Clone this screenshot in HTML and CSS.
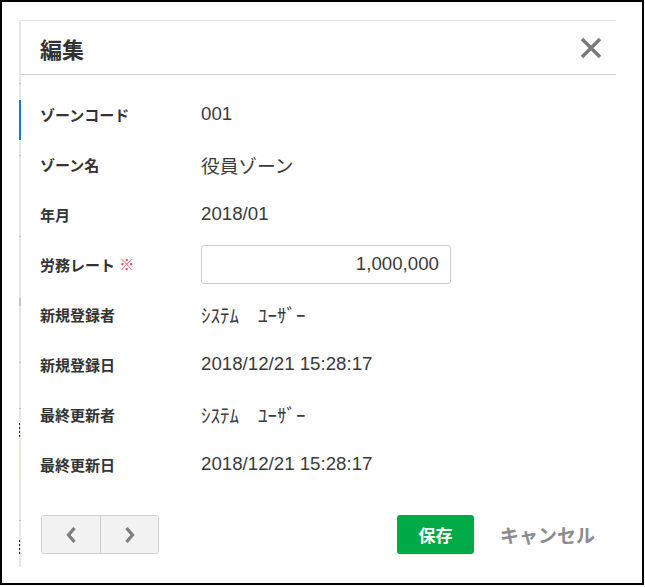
FILE: index.html
```html
<!DOCTYPE html>
<html lang="ja">
<head>
<meta charset="utf-8">
<title>編集</title>
<link rel="stylesheet" href="styles.css">
</head>
<body>
<div class="frame">
	<div class="rail"></div>
	<div class="dialog">
		<div class="dialog_head">
			<h1 class="dialog_title">編集</h1>
			<button class="btn_close" type="button" title="閉じる">
				<svg width="22" height="22" viewBox="0 0 22 22"><path d="M2 2 L20 20 M20 2 L2 20" stroke="#7a7a7a" stroke-width="3.4" fill="none"/></svg>
			</button>
		</div>

		<div class="dialog_body">
			<div class="field_row">
				<label class="field_label">ゾーンコード</label>
				<div class="field_value">001</div>
			</div>
			<div class="field_row">
				<label class="field_label">ゾーン名</label>
				<div class="field_value">役員ゾーン</div>
			</div>
			<div class="field_row">
				<label class="field_label">年月</label>
				<div class="field_value">2018/01</div>
			</div>
			<div class="field_row">
				<label class="field_label">労務レート <span class="required">※</span></label>
				<div class="field_value"><input class="text_input" type="text" value="1,000,000"></div>
			</div>
			<div class="field_row">
				<label class="field_label">新規登録者</label>
				<div class="field_value kana">ｼｽﾃﾑ　ﾕｰｻﾞｰ</div>
			</div>
			<div class="field_row">
				<label class="field_label">新規登録日</label>
				<div class="field_value">2018/12/21 15:28:17</div>
			</div>
			<div class="field_row">
				<label class="field_label">最終更新者</label>
				<div class="field_value kana">ｼｽﾃﾑ　ﾕｰｻﾞｰ</div>
			</div>
			<div class="field_row">
				<label class="field_label">最終更新日</label>
				<div class="field_value">2018/12/21 15:28:17</div>
			</div>
		</div>

		<div class="dialog_foot">
			<div class="pager">
				<button class="pager_btn" type="button">
					<svg width="12" height="18" viewBox="0 0 12 18"><path d="M9.5 2 L3.5 9 L9.5 16" stroke="#7d7d7d" stroke-width="3.2" fill="none"/></svg>
				</button>
				<button class="pager_btn" type="button">
					<svg width="12" height="18" viewBox="0 0 12 18"><path d="M2.5 2 L8.5 9 L2.5 16" stroke="#7d7d7d" stroke-width="3.2" fill="none"/></svg>
				</button>
			</div>
			<div class="actions">
				<button class="btn_save" type="button">保存</button>
				<button class="btn_cancel" type="button">キャンセル</button>
			</div>
		</div>
	</div>
</div>
</body>
</html>
```

FILE: styles.css
```css
html, body {
margin: 0;
padding: 0;
background: #fff;
font-family: "Liberation Sans", "Noto Sans CJK JP", sans-serif;
color: #333;
}

.frame {
box-sizing: border-box;
width: 644px;
height: 585px;
border: 2px solid #000;
padding: 18px 0 0 17px;
display: flex;
align-items: flex-start;
overflow: hidden;
}

/* bits of the page behind the dialog */
.rail {
width: 2px;
height: 547px;
border-top-left-radius: 3px;
background:
  linear-gradient(#0a82c4, #0a82c4) 0 80px / 2px 40px no-repeat,
  linear-gradient(#c4c4c4, #c4c4c4) 0 63px / 2px 1px no-repeat,
  linear-gradient(#c4c4c4, #c4c4c4) 0 135px / 2px 1px no-repeat,
  linear-gradient(#c4c4c4, #c4c4c4) 0 216px / 2px 1px no-repeat,
  linear-gradient(#c4c4c4, #c4c4c4) 0 278px / 2px 8px no-repeat,
  linear-gradient(#c4c4c4, #c4c4c4) 0 342px / 2px 1px no-repeat,
  linear-gradient(#c4c4c4, #c4c4c4) 0 388px / 2px 1px no-repeat,
  repeating-linear-gradient(#222 0 2px, transparent 2px 4px) 0 403px / 1px 14px no-repeat,
  linear-gradient(#efe4d6, #efe4d6) 0 420px / 2px 40px no-repeat,
  linear-gradient(#c4c4c4, #c4c4c4) 0 500px / 2px 1px no-repeat,
  repeating-linear-gradient(#222 0 2px, transparent 2px 4px) 0 520px / 1px 14px no-repeat,
  #e6e6e6;
}

.dialog {
width: 595px;
height: 547px;
background: #fff;
border-top: 1px solid #e2e2e2;
box-sizing: border-box;
display: flex;
flex-direction: column;
}

.dialog_head {
height: 54px;
box-sizing: border-box;
border-bottom: 1px solid #d4d4d4;
display: flex;
align-items: center;
justify-content: space-between;
padding: 0 14px 0 19px;
}

.dialog_title {
margin: 0;
font-size: 22px;
font-weight: bold;
color: #333;
}

.btn_close {
border: 0;
background: transparent;
padding: 0;
width: 22px;
height: 22px;
display: flex;
}

.dialog_body {
padding: 14px 0 0 19px;
}

.field_row {
height: 50px;
display: flex;
align-items: center;
}

.field_label {
width: 161px;
flex: none;
font-size: 15px;
font-weight: bold;
color: #333;
}

.required {
color: #e8436f;
font-size: 15px;
font-weight: normal;
vertical-align: 1px;
}

.field_value {
font-size: 18.7px;
color: #3a3a3a;
}

.kana {
font-size: 19px;
}

.text_input {
box-sizing: border-box;
width: 250px;
height: 39px;
border: 1px solid #ccc;
border-radius: 3px;
padding: 0 11px;
text-align: right;
font-family: "Liberation Sans", "Noto Sans CJK JP", sans-serif;
font-size: 18.7px;
color: #3a3a3a;
outline: none;
}

.dialog_foot {
margin-top: 26px;
padding: 0 21px 0 20px;
display: flex;
align-items: center;
justify-content: space-between;
}

.pager {
display: flex;
border: 1px solid #cfcfcf;
border-radius: 3px;
overflow: hidden;
}

.pager_btn {
width: 58px;
height: 37px;
border: 0;
background: #f2f2f2;
display: flex;
align-items: center;
justify-content: center;
padding: 0;
}

.pager_btn + .pager_btn {
border-left: 1px solid #cfcfcf;
}

.actions {
display: flex;
align-items: center;
gap: 26px;
}

.btn_save {
width: 77px;
height: 39px;
border: 0;
border-radius: 3px;
background: #00aa47;
color: #fff;
font-family: "Liberation Sans", "Noto Sans CJK JP", sans-serif;
font-size: 17px;
font-weight: bold;
padding: 0;
}

.btn_cancel {
border: 0;
background: transparent;
padding: 0;
font-family: "Liberation Sans", "Noto Sans CJK JP", sans-serif;
font-size: 19px;
font-weight: bold;
color: #8c8c8c;
}
```
